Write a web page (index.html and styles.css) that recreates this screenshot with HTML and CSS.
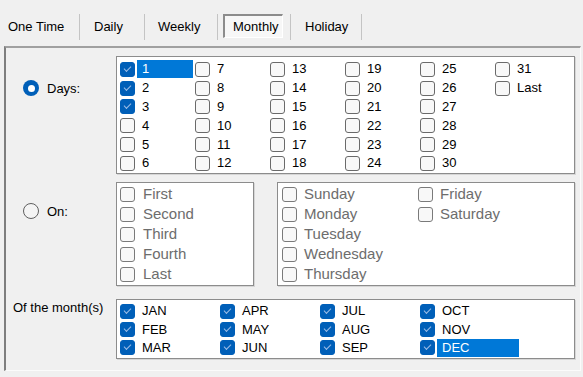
FILE: index.html
```html
<!DOCTYPE html>
<html lang="en">

<head>
    <meta charset="UTF-8">
    <meta name="viewport" content="width=device-width, initial-scale=1.0">
    <title>Schedule - Monthly</title>
    <link rel="stylesheet" href="styles.css">
</head>

<body>
    <div class="tabs">
        <div class="tab tab-one">One Time</div>
        <div class="tab tab-daily">Daily</div>
        <div class="tab tab-weekly">Weekly</div>
        <div class="tab tab-monthly"><span class="active">Monthly</span></div>
        <div class="tab tab-holiday">Holiday</div>
    </div>

    <div class="panel">
        <div class="choice choice-days">
            <span class="radio checked"></span>
            <span>Days:</span>
        </div>
        <div class="list days">
            <div class="item"><span class="cb on"></span><span class="txt selected">1</span></div>
            <div class="item"><span class="cb on"></span><span class="txt">2</span></div>
            <div class="item"><span class="cb on"></span><span class="txt">3</span></div>
            <div class="item"><span class="cb"></span><span class="txt">4</span></div>
            <div class="item"><span class="cb"></span><span class="txt">5</span></div>
            <div class="item"><span class="cb"></span><span class="txt">6</span></div>
            <div class="item"><span class="cb"></span><span class="txt">7</span></div>
            <div class="item"><span class="cb"></span><span class="txt">8</span></div>
            <div class="item"><span class="cb"></span><span class="txt">9</span></div>
            <div class="item"><span class="cb"></span><span class="txt">10</span></div>
            <div class="item"><span class="cb"></span><span class="txt">11</span></div>
            <div class="item"><span class="cb"></span><span class="txt">12</span></div>
            <div class="item"><span class="cb"></span><span class="txt">13</span></div>
            <div class="item"><span class="cb"></span><span class="txt">14</span></div>
            <div class="item"><span class="cb"></span><span class="txt">15</span></div>
            <div class="item"><span class="cb"></span><span class="txt">16</span></div>
            <div class="item"><span class="cb"></span><span class="txt">17</span></div>
            <div class="item"><span class="cb"></span><span class="txt">18</span></div>
            <div class="item"><span class="cb"></span><span class="txt">19</span></div>
            <div class="item"><span class="cb"></span><span class="txt">20</span></div>
            <div class="item"><span class="cb"></span><span class="txt">21</span></div>
            <div class="item"><span class="cb"></span><span class="txt">22</span></div>
            <div class="item"><span class="cb"></span><span class="txt">23</span></div>
            <div class="item"><span class="cb"></span><span class="txt">24</span></div>
            <div class="item"><span class="cb"></span><span class="txt">25</span></div>
            <div class="item"><span class="cb"></span><span class="txt">26</span></div>
            <div class="item"><span class="cb"></span><span class="txt">27</span></div>
            <div class="item"><span class="cb"></span><span class="txt">28</span></div>
            <div class="item"><span class="cb"></span><span class="txt">29</span></div>
            <div class="item"><span class="cb"></span><span class="txt">30</span></div>
            <div class="item"><span class="cb"></span><span class="txt">31</span></div>
            <div class="item"><span class="cb"></span><span class="txt">Last</span></div>
        </div>

        <div class="choice choice-on">
            <span class="radio"></span>
            <span>On:</span>
        </div>
        <div class="on-row">
            <div class="list disabled which">
                <div class="item"><span class="cb"></span><span class="txt">First</span></div>
                <div class="item"><span class="cb"></span><span class="txt">Second</span></div>
                <div class="item"><span class="cb"></span><span class="txt">Third</span></div>
                <div class="item"><span class="cb"></span><span class="txt">Fourth</span></div>
                <div class="item"><span class="cb"></span><span class="txt">Last</span></div>
            </div>
            <div class="list disabled weekdays">
                <div class="item"><span class="cb"></span><span class="txt">Sunday</span></div>
                <div class="item"><span class="cb"></span><span class="txt">Monday</span></div>
                <div class="item"><span class="cb"></span><span class="txt">Tuesday</span></div>
                <div class="item"><span class="cb"></span><span class="txt">Wednesday</span></div>
                <div class="item"><span class="cb"></span><span class="txt">Thursday</span></div>
                <div class="item"><span class="cb"></span><span class="txt">Friday</span></div>
                <div class="item"><span class="cb"></span><span class="txt">Saturday</span></div>
            </div>
        </div>

        <div class="months-label">Of the month(s)</div>
        <div class="list months">
            <div class="item"><span class="cb on"></span><span class="txt">JAN</span></div>
            <div class="item"><span class="cb on"></span><span class="txt">FEB</span></div>
            <div class="item"><span class="cb on"></span><span class="txt">MAR</span></div>
            <div class="item"><span class="cb on"></span><span class="txt">APR</span></div>
            <div class="item"><span class="cb on"></span><span class="txt">MAY</span></div>
            <div class="item"><span class="cb on"></span><span class="txt">JUN</span></div>
            <div class="item"><span class="cb on"></span><span class="txt">JUL</span></div>
            <div class="item"><span class="cb on"></span><span class="txt">AUG</span></div>
            <div class="item"><span class="cb on"></span><span class="txt">SEP</span></div>
            <div class="item"><span class="cb on"></span><span class="txt">OCT</span></div>
            <div class="item"><span class="cb on"></span><span class="txt">NOV</span></div>
            <div class="item"><span class="cb on"></span><span class="txt selected">DEC</span></div>
        </div>
    </div>
</body>

</html>
```

FILE: styles.css
```css
body {
    margin: 0;
    width: 583px;
    height: 377px;
    overflow: hidden;
    background-color: #f0f0f0;
    color: #000;
    font-family: "Liberation Sans", Arial, sans-serif;
    font-size: 13px;
}

/* tab strip */
.tabs {
    display: flex;
    height: 46px;
    padding-top: 14px;
    box-sizing: border-box;
}

.tab {
    height: 26px;
    line-height: 26px;
    border-right: 1px solid #c4c4c4;
    box-sizing: border-box;
    white-space: nowrap;
}

.tab-one {
    width: 80px;
    padding-left: 8px;
}

.tab-daily {
    width: 65px;
    padding-left: 14px;
}

.tab-weekly {
    width: 73px;
    padding-left: 13px;
}

.tab-monthly {
    width: 73px;
    padding-left: 5px;
}

.tab-holiday {
    width: 71px;
    padding-left: 14px;
}

.active {
    display: block;
    width: 60px;
    height: 24px;
    line-height: 21px;
    padding-left: 8px;
    box-sizing: border-box;
    background: #f7f7f7;
    border-top: 2px solid #8c8c8c;
    border-left: 2px solid #8c8c8c;
    border-right: 1px solid #fff;
    border-bottom: 1px solid #fff;
}

/* page panel */
.panel {
    margin-left: 4px;
    width: 577px;
    height: 325px;
    box-sizing: border-box;
    border-top: 2px solid #a0a0a0;
    border-left: 2px solid #7e7e7e;
    border-right: 1px solid #fbfbfb;
    border-bottom: 1px solid #fbfbfb;
    padding-top: 8px;
    display: grid;
    grid-template-columns: 110px 459px;
    grid-template-rows: 118px 104px 60px;
    row-gap: 8px;
}

.choice {
    display: flex;
    align-items: center;
    gap: 8px;
    padding-left: 17px;
    height: 16px;
}

.choice-days {
    margin-top: 24px;
}

.choice-on {
    margin-top: 21px;
}

.radio {
    width: 16px;
    height: 16px;
    border-radius: 50%;
    box-sizing: border-box;
    border: 1px solid #5f5f5f;
    background: #f4f4f4;
    display: flex;
    align-items: center;
    justify-content: center;
}

.radio.checked {
    border: none;
    background: #005fb8;
}

.radio.checked::after {
    content: "";
    width: 7px;
    height: 7px;
    border-radius: 50%;
    background: #fff;
}

.months-label {
    margin-top: 6px;
    padding-left: 7px;
    line-height: 16px;
    white-space: nowrap;
}

/* checked list boxes */
.list {
    background: #fff;
    border: 1px solid #8c8c8c;
    box-shadow: 1px 1px 0 #d6d6d6;
    box-sizing: border-box;
    display: grid;
    grid-auto-flow: column;
}

.item {
    display: flex;
    align-items: center;
    white-space: nowrap;
}

.cb {
    position: relative;
    flex: none;
    width: 15px;
    height: 15px;
    box-sizing: border-box;
    border: 1px solid #6a6a6a;
    border-radius: 3px;
    background: #f8f8f8;
}

.cb.on {
    border-color: #005fb8;
    background: #005fb8;
}

.cb.on::after {
    content: "";
    position: absolute;
    left: 3px;
    top: 3px;
    width: 6px;
    height: 3px;
    border-left: 1px solid #9dbde6;
    border-bottom: 1px solid #9dbde6;
    transform: rotate(-45deg);
}

.txt {
    margin-left: 2px;
    padding-left: 5px;
    height: 18px;
    line-height: 18px;
    box-sizing: border-box;
}

.selected {
    background: #0078d7;
    color: #fff;
}

.days {
    padding: 3px 0 0 3px;
    grid-template-rows: repeat(6, 18.8px);
    grid-template-columns: repeat(6, 75px);
    align-content: start;
}

.days .txt {
    width: 56px;
}

.months {
    margin-top: 5px;
    height: 60px;
    padding: 2px 0 0 3px;
    grid-template-rows: repeat(3, 18.4px);
    grid-template-columns: repeat(4, 100px);
    align-content: start;
}

.months .txt {
    width: 82px;
}

.on-row {
    display: flex;
    gap: 23px;
}

.disabled {
    color: #6d6d6d;
    font-size: 15px;
    padding-top: 1px;
    grid-template-rows: repeat(5, 20px);
    align-content: start;
}

.disabled .cb {
    border-color: #7a7a7a;
}

.disabled .txt {
    margin-left: 0;
    padding-left: 8px;
}

.which {
    width: 138px;
    padding-left: 3px;
}

.weekdays {
    flex: 1;
    padding-left: 4px;
    grid-template-columns: 136px 136px;
}

.weekdays .txt {
    padding-left: 7px;
}
```
